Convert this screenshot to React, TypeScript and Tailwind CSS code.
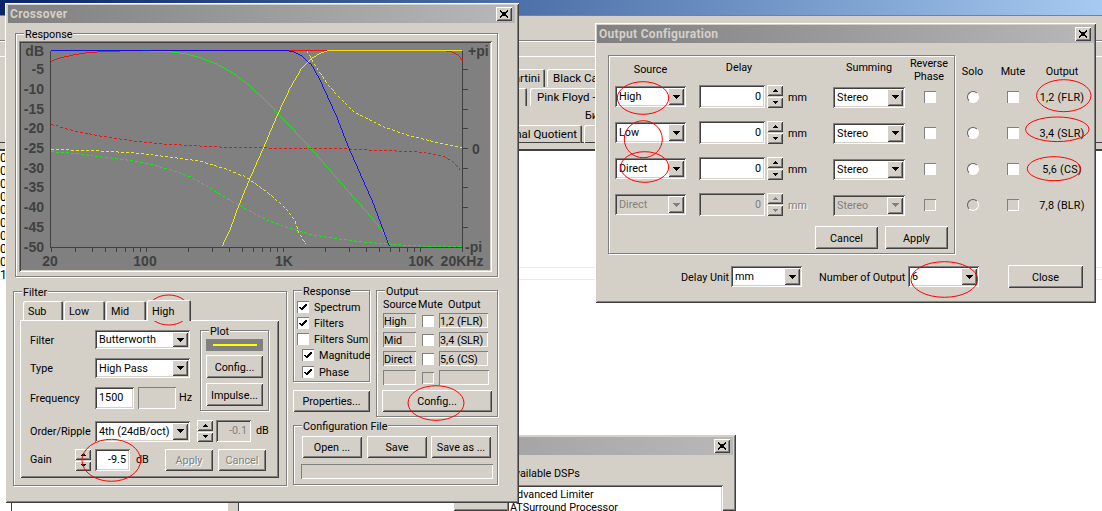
import React from "react";

const SUNKEN = "shadow-[inset_1px_1px_0_#808080,inset_-1px_-1px_0_#fff,inset_2px_2px_0_#404040,inset_-2px_-2px_0_#d4d0c8]";
const RAISED = "shadow-[inset_1px_1px_0_#fff,inset_-1px_-1px_0_#404040,inset_2px_2px_0_#d4d0c8,inset_-2px_-2px_0_#808080]";
const THIN = "shadow-[inset_1px_1px_0_#808080,inset_-1px_-1px_0_#fff]";
const ETCH = "border border-[#808080] shadow-[inset_1px_1px_0_#fff,1px_1px_0_#fff]";
const DISABLED_TEXT = "text-[#808080] [text-shadow:1px_1px_0_#fff]";

function CloseBtn() {
  return (
    <div className={`w-[16px] h-[14px] bg-[#d4d0c8] flex items-center justify-center ${RAISED}`}>
      <svg width="10" height="8" viewBox="0 0 10 8">
        <path d="M1 0.5 L9 7.5 M9 0.5 L1 7.5" stroke="#000" strokeWidth="1.7" shapeRendering="crispEdges" />
      </svg>
    </div>
  );
}

function TitleBar({ title, cls }: { title: string; cls: string }) {
  return (
    <div className={`h-[18px] flex items-center justify-between pl-[2px] pr-[3px] shrink-0 bg-gradient-to-r from-[#808080] to-[#b8b8b8] ${cls}`}>
      <span className="font-bold text-[12px] text-[#d4d0c8] tracking-[0.3px]">{title}</span>
      <CloseBtn />
    </div>
  );
}

function Btn({ label, cls, disabled }: { label: string; cls: string; disabled?: boolean }) {
  return (
    <div className={`flex items-center justify-center pt-[2px] bg-[#d4d0c8] ${RAISED} ${disabled ? DISABLED_TEXT : ""} ${cls}`}>{label}</div>
  );
}

function Arrow({ up, color = "#000", w = 7 }: { up?: boolean; color?: string; w?: number }) {
  const h = Math.ceil(w / 2);
  return (
    <svg width={w} height={h} viewBox={`0 0 ${w} ${h}`} shapeRendering="crispEdges">
      <path d={up ? `M${w / 2} 0 L${w} ${h} L0 ${h} Z` : `M0 0 L${w} 0 L${w / 2} ${h} Z`} fill={color} />
    </svg>
  );
}

function Combo({ value, cls, disabled }: { value: string; cls: string; disabled?: boolean }) {
  return (
    <div className={`flex items-stretch p-[2px] ${SUNKEN} ${disabled ? "bg-[#d4d0c8]" : "bg-white"} ${cls}`}>
      <div className={`flex-1 pl-[2px] pt-[1px] flex items-center whitespace-nowrap overflow-hidden ${disabled ? "text-[#808080]" : ""}`}>{value}</div>
      <div className={`w-[16px] shrink-0 bg-[#d4d0c8] flex items-center justify-center ${RAISED}`}>
        <Arrow color={disabled ? "#808080" : "#000"} />
      </div>
    </div>
  );
}

function Edit({ value, cls, disabled }: { value?: string; cls: string; disabled?: boolean }) {
  return (
    <div className={`flex items-center px-[4px] whitespace-nowrap ${SUNKEN} ${disabled ? "bg-[#d4d0c8] text-[#808080]" : "bg-white"} ${cls}`}>{value}</div>
  );
}

function Spin({ cls, disabled }: { cls: string; disabled?: boolean }) {
  const c = disabled ? "#808080" : "#000";
  return (
    <div className={`flex flex-col gap-[1px] ${cls}`}>
      <div className={`flex-1 bg-[#d4d0c8] flex items-center justify-center ${RAISED}`}><Arrow up color={c} w={5} /></div>
      <div className={`flex-1 bg-[#d4d0c8] flex items-center justify-center ${RAISED}`}><Arrow color={c} w={5} /></div>
    </div>
  );
}

function Check({ checked, disabled, cls = "" }: { checked?: boolean; disabled?: boolean; cls?: string }) {
  return (
    <div className={`w-[12px] h-[12px] shrink-0 ${THIN} ${disabled ? "bg-[#d4d0c8]" : "bg-white"} flex items-center justify-center ${cls}`}>
      {checked && (
        <svg width="8" height="8" viewBox="0 0 8 8" shapeRendering="crispEdges">
          <path d="M0.5 4 L3 6.5 L7.5 1.2" fill="none" stroke="#000" strokeWidth="1.8" />
        </svg>
      )}
    </div>
  );
}

function Radio({ disabled }: { disabled?: boolean }) {
  return (
    <div className={`w-[12px] h-[12px] rounded-full border border-t-[#606060] border-l-[#606060] border-r-white border-b-white ${disabled ? "bg-[#d4d0c8]" : "bg-white"}`} />
  );
}

function Group({ label, cls, children }: { label?: string; cls: string; children: React.ReactNode }) {
  return (
    <div className={`relative ${ETCH} ${cls}`}>
      {label && <span className="absolute -top-[5px] left-[8px] bg-[#d4d0c8] px-[1px] leading-[12px] whitespace-nowrap">{label}</span>}
      {children}
    </div>
  );
}

function RO({ value, cls }: { value?: string; cls: string }) {
  return <div className={`flex items-center pl-[1px] pt-[2px] whitespace-nowrap ${THIN} ${cls}`}>{value}</div>;
}

const P = (pts: number[][]) => pts.map((p, i) => `${i ? "L" : "M"}${(p[0] / 3).toFixed(1)} ${(p[1] / 3).toFixed(1)}`).join(" ");

const curves: { c: string; d?: boolean; p: number[][] }[] = [
  { c: "#00ff00", d: true, p: [[152,455],[220,460],[300,470],[380,480],[450,492],[520,512],[570,530],[620,558],[680,595],[740,628],[800,660],[860,682],[930,703],[1000,715],[1080,725],[1170,733],[1260,738],[1387,739]] },
  { c: "#ffff00", d: true, p: [[152,448],[300,453],[420,460],[500,470],[600,483],[680,508],[740,533],[800,575],[850,618],[885,660],[895,695],[917,732]] },
  { c: "#ffff00", d: true, p: [[920,152],[945,195],[985,255],[1020,295],[1060,335],[1100,355],[1150,380],[1220,405],[1300,425],[1387,443]] },
  { c: "#ff0000", d: true, p: [[152,373],[220,392],[300,408],[400,423],[500,433],[700,443],[900,445],[1000,445],[1100,450],[1250,455],[1330,468],[1365,490],[1385,515]] },
  { c: "#ff0000", p: [[152,184],[180,174],[215,166],[260,158],[320,154],[400,152],[1330,152],[1355,155],[1375,165],[1387,182]] },
  { c: "#00ff00", p: [[425,152],[510,155],[560,162],[600,173],[650,192],[700,220],[750,258],[800,305],[850,358],[900,410],[950,465],[1000,522],[1050,580],[1100,635],[1145,690],[1170,733]] },
  { c: "#0000ff", p: [[152,152],[860,152],[880,155],[905,168],[935,195],[960,240],[985,295],[1010,350],[1045,440],[1080,520],[1120,610],[1150,690],[1168,738]] },
  { c: "#ffff00", p: [[667,738],[690,690],[715,620],[750,535],[790,445],[830,350],[870,265],[905,205],[935,175],[960,160],[985,152],[1387,152]] },
];

const yLabels: [string, number][] = [["dB",152],["-5",207],["-10",268],["-15",328],["-20",385],["-25",445],["-30",505],["-35",560],["-40",622],["-45",682],["-50",741]];
const freqTicks: number[] = [];
[10, 100, 1000, 10000].forEach((d) => { for (let i = 1; i < 10; i++) { const f = d * i; if (f >= 20 && f <= 20000) freqTicks.push(f); } });
const fx = (f: number) => Math.round(50.7 + 137 * Math.log10(f / 20)) + 0.5;

function Chart() {
  const txt = { fill: "#404040", fontFamily: "'Liberation Sans', Arial, sans-serif", fontSize: 14, fontWeight: 700 };
  return (
    <svg width="469" height="227" viewBox="21 43 469 227" className="block bg-[#808080]">
      <g stroke="#404040" strokeWidth="1" shapeRendering="crispEdges">
        <path d="M50.5 51 V247.5 H462.5 V51" fill="none" />
        {yLabels.slice(1, -1).map(([, y]) => <path key={y} d={`M462.5 ${Math.round(y / 3) + 0.5} h5`} />)}
        {freqTicks.map((f) => <path key={f} d={`M${fx(f)} 247.5 v4`} />)}
      </g>
      {curves.map((c, i) => (
        <path key={i} d={P(c.p)} fill="none" stroke={c.c} strokeWidth={0.85} strokeDasharray={c.d ? "3 2" : undefined} shapeRendering="crispEdges" />
      ))}
      {yLabels.map(([t, y]) => <text key={t} x="44" y={y / 3 + 5} textAnchor="end" {...txt}>{t}</text>)}
      <text x="468" y="56" {...txt}>+pi</text>
      <text x="472" y="153.5" {...txt}>0</text>
      <text x="465" y="252" {...txt}>-pi</text>
      <text x="50" y="266" textAnchor="middle" {...txt}>20</text>
      <text x="145" y="266" textAnchor="middle" {...txt}>100</text>
      <text x="284" y="266" textAnchor="middle" {...txt}>1K</text>
      <text x="421" y="266" textAnchor="middle" {...txt}>10K</text>
      <text x="462" y="266" textAnchor="middle" {...txt}>20KHz</text>
    </svg>
  );
}

function Tab({ label, cls }: { label: string; cls: string }) {
  return (
    <div className={`bg-[#d4d0c8] rounded-t-[2px] flex items-center shadow-[inset_1px_1px_0_#fff,inset_-1px_0_0_#404040,inset_-2px_0_0_#808080] pl-[5px] pt-[2px] ${cls}`}>{label}</div>
  );
}

function Crossover() {
  return (
    <div className={`absolute left-[5px] top-[3px] w-[514px] h-[500px] bg-[#d4d0c8] pl-[3px] pt-[2px] flex flex-col ${RAISED}`}>
      <TitleBar title="Crossover" cls="w-[507px]" />
      <Group label="Response" cls="ml-[7px] mt-[10px] w-[483px] h-[244px] pl-[3px] pt-[7px] shrink-0">
        <div className={`w-[473px] h-[231px] p-[2px] ${SUNKEN}`}>
          <Chart />
        </div>
      </Group>
      <div className="flex ml-[5px] mt-[13px] items-start">
        <Group label="Filter" cls="w-[274px] h-[195px] mt-[1px] pl-[6px] pt-[8px] shrink-0">
          <div className="flex items-end pl-[3px] h-[20px] relative z-10 gap-[1px]">
            <Tab label="Sub" cls="w-[40px] h-[19px]" />
            <Tab label="Low" cls="w-[41px] h-[19px]" />
            <Tab label="Mid" cls="w-[40px] h-[19px]" />
            <Tab label="High" cls="w-[44px] h-[21px] -mb-[1px]" />
          </div>
          <div className={`w-[259px] h-[158px] pl-[10px] pt-[10px] flex flex-col ${RAISED}`}>
            <div className="flex h-[81px] shrink-0">
              <div className="w-[170px] flex flex-col gap-[9px] shrink-0">
                <div className="flex items-center h-[19px]"><span className="w-[65px] pt-[2px]">Filter</span><Combo value="Butterworth" cls="w-[95px] h-[19px]" /></div>
                <div className="flex items-center h-[20px]"><span className="w-[65px] pt-[2px]">Type</span><Combo value="High Pass" cls="w-[95px] h-[20px]" /></div>
                <div className="flex items-center h-[22px]">
                  <span className="w-[65px] pt-[2px]">Frequency</span>
                  <Edit value="1500" cls="w-[39px] h-[22px]" />
                  <RO cls="w-[38px] h-[22px] ml-[4px]" />
                  <span className="ml-[3px]">Hz</span>
                </div>
              </div>
              <Group label="Plot" cls="w-[69px] h-[81px] px-[5px] pt-[8px] flex flex-col">
                <div className="h-[12px] shrink-0 bg-[#808080] pt-[5px] flex justify-center"><div className="w-[44px] h-[2px] bg-[#ffff00]" /></div>
                <Btn label="Config..." cls="h-[23px] mt-[4px]" />
                <Btn label="Impulse..." cls="h-[23px] mt-[5px]" />
              </Group>
            </div>
            <div className="flex items-center h-[22px] mt-[9px] shrink-0">
              <span className="w-[65px] whitespace-nowrap pt-[2px]">Order/Ripple</span>
              <Combo value="4th (24dB/oct)" cls="w-[95px] h-[21px]" />
              <Spin cls="w-[16px] h-[22px] ml-[7px]" />
              <Edit value="-0.1" disabled cls="w-[35px] h-[22px] ml-[3px] justify-end" />
              <span className="ml-[5px]">dB</span>
            </div>
            <div className="flex items-center h-[22px] mt-[7px] shrink-0">
              <span className="w-[45px]">Gain</span>
              <Spin cls="w-[16px] h-[22px]" />
              <Edit value="-9.5" cls="w-[35px] h-[22px] ml-[4px] justify-end" />
              <span className="ml-[6px] w-[29px]">dB</span>
              <Btn label="Apply" disabled cls="w-[48px] h-[22px]" />
              <Btn label="Cancel" disabled cls="w-[48px] h-[22px] ml-[5px]" />
            </div>
          </div>
        </Group>
        <div className="ml-[6px] w-[205px] shrink-0 flex flex-col">
          <div className="flex gap-[6px] h-[127px]">
            <div className="flex flex-col w-[77px]">
              <Group label="Response" cls="h-[92px] pl-[3px] pt-[10px] flex flex-col gap-[4px]">
                <div className="flex items-center h-[12px] gap-[5px]"><Check checked /><span className="pt-[2px]">Spectrum</span></div>
                <div className="flex items-center h-[12px] gap-[5px]"><Check checked /><span className="pt-[2px]">Filters</span></div>
                <div className="flex items-center h-[12px] gap-[5px] whitespace-nowrap"><Check /><span className="pt-[2px]">Filters Sum</span></div>
                <div className="flex items-center h-[12px] gap-[5px] pl-[5px]"><Check checked /><span className="pt-[2px]">Magnitude</span></div>
                <div className="flex items-center h-[12px] gap-[5px] pl-[5px] mt-[1px]"><Check checked /><span className="pt-[2px]">Phase</span></div>
              </Group>
              <Btn label="Properties..." cls="h-[22px] mt-[8px]" />
            </div>
            <Group label="Output" cls="w-[122px] h-[127px] pl-[6px] flex flex-col">
              <div className="flex h-[15px] mt-[6px] whitespace-nowrap leading-[15px]">
                <span className="w-[35px]">Source</span>
                <span className="w-[30px]">Mute</span>
                <span>Output</span>
              </div>
              <div className="grid grid-cols-[39px_17px_50px] gap-y-[4px] mt-[1px] items-center">
                <RO value="High" cls="w-[33px] h-[15px]" />
                <Check />
                <RO value="1,2 (FLR)" cls="w-[49px] h-[15px]" />
                <RO value="Mid" cls="w-[33px] h-[15px]" />
                <Check />
                <RO value="3,4 (SLR)" cls="w-[49px] h-[15px]" />
                <RO value="Direct" cls="w-[33px] h-[15px]" />
                <Check />
                <RO value="5,6 (CS)" cls="w-[49px] h-[15px]" />
                <RO cls="w-[33px] h-[15px]" />
                <Check disabled />
                <RO cls="w-[50px] h-[15px]" />
              </div>
              <Btn label="Config..." cls="w-[110px] h-[22px] mt-[5px] -ml-[1px]" />
            </Group>
          </div>
          <Group label="Configuration File" cls="h-[60px] mt-[8px] pl-[8px] pt-[10px] flex flex-col">
            <div className="flex h-[22px]">
              <Btn label="Open ..." cls="w-[60px]" />
              <Btn label="Save" cls="w-[60px] ml-[5px]" />
              <Btn label="Save as ..." cls="w-[60px] ml-[4px]" />
            </div>
            <div className={`w-[192px] h-[15px] mt-[6px] ${THIN} -ml-[1px]`} />
          </Group>
        </div>
      </div>
    </div>
  );
}

function OutRow({ source, dis }: { source: string; dis?: boolean }) {
  return (
    <div className="flex items-center h-[23px]">
      <Combo value={source} disabled={dis} cls="w-[71px] h-[21px]" />
      <Edit value="0" disabled={dis} cls="w-[66px] h-[23px] ml-[13px] justify-end" />
      <Spin disabled={dis} cls="w-[16px] h-[23px] ml-[2px]" />
      <span className={`ml-[5px] w-[45px] pt-[2px] ${dis ? "text-[#808080] [text-shadow:1px_1px_0_#fff]" : ""}`}>mm</span>
      <Combo value="Stereo" disabled={dis} cls="w-[72px] h-[21px] mt-[1px]" />
      <Check disabled={dis} cls="ml-[19px]" />
    </div>
  );
}

function OutputConfig() {
  const rows: [boolean, string][] = [[false, "1,2 (FLR)"], [false, "3,4 (SLR)"], [false, "5,6 (CS)"], [true, "7,8 (BLR)"]];
  return (
    <div className={`absolute left-[595px] top-[23px] w-[501px] h-[280px] bg-[#d4d0c8] pl-[2px] pt-[2px] flex flex-col ${RAISED}`}>
      <TitleBar title="Output Configuration" cls="w-[497px]" />
      <div className="flex mt-[12px] ml-[11px] shrink-0">
        <Group cls="w-[347px] h-[199px] pl-[6px] shrink-0">
          <div className="flex h-[29px] items-end text-center">
            <div className="w-[71px] pb-[8px]">Source</div>
            <div className="w-[80px] ml-[13px] pb-[10px]">Delay</div>
            <div className="w-[72px] ml-[54px] pb-[10px]">Summing</div>
            <div className="w-[50px] -ml-[1px] leading-[13px] pb-[2px]">Reverse<br />Phase</div>
          </div>
          <div className="flex flex-col gap-[13px]">
            <OutRow source="High" />
            <OutRow source="Low" />
            <OutRow source="Direct" />
            <OutRow source="Direct" dis />
          </div>
          <div className="flex mt-[10px] ml-[200px] gap-[7px]">
            <Btn label="Cancel" cls="w-[63px] h-[23px]" />
            <Btn label="Apply" cls="w-[63px] h-[23px]" />
          </div>
        </Group>
        <div className="grid grid-cols-[35px_46px_52px] auto-rows-[36px] grid-rows-[14px] pt-[10px] justify-items-center items-center">
          <span>Solo</span><span>Mute</span><span className="whitespace-nowrap">Output</span>
          {rows.map(([d, t]) => (
            <React.Fragment key={t}>
              <Radio disabled={d} />
              <Check disabled={d} />
              <span className="whitespace-nowrap pt-[1px] tracking-[0.2px]">{t}</span>
            </React.Fragment>
          ))}
        </div>
      </div>
      <div className="flex items-center mt-[11px] ml-[84px] h-[23px] shrink-0">
        <span className="w-[50px] whitespace-nowrap pt-[2px]">Delay Unit</span>
        <Combo value="mm" cls="w-[71px] h-[21px]" />
        <span className="w-[89px] ml-[17px] whitespace-nowrap pt-[2px]">Number of Output</span>
        <Combo value="6" cls="w-[71px] h-[21px]" />
        <Btn label="Close" cls="w-[75px] h-[23px] ml-[29px]" />
      </div>
    </div>
  );
}

function DspWindow() {
  return (
    <div className={`absolute left-[453px] top-[434px] w-[283px] h-[77px] overflow-hidden bg-[#d4d0c8] p-[3px] flex flex-col ${RAISED}`}>
      <TitleBar title="" cls="w-[277px] from-[#a0a0a0]" />
      <div className="pl-[52px] mt-[12px] whitespace-nowrap leading-[13px] shrink-0">Available DSPs</div>
      <div className={`ml-[51px] w-[216px] h-[60px] mt-[5px] bg-white pl-[3px] pt-[3px] leading-[13px] whitespace-nowrap shrink-0 ${SUNKEN}`}>
        <div>Advanced Limiter</div>
        <div>ATSurround Processor</div>
      </div>
    </div>
  );
}

function BgTab({ label, cls }: { label: string; cls: string }) {
  return (
    <div className={`h-[18px] flex items-center whitespace-nowrap overflow-hidden pl-[6px] rounded-t-[2px] text-[11.5px] shadow-[inset_1px_1px_0_#fff,inset_-1px_0_0_#404040,inset_-2px_0_0_#808080] ${cls}`}>{label}</div>
  );
}

function Background() {
  return (
    <div className="absolute inset-0 flex flex-col">
      <div className="h-[15px] shrink-0 bg-gradient-to-r from-[#0a246a] to-[#a6caf0]" />
      <div className="h-[134px] shrink-0 bg-[#d4d0c8] border-t border-[#808080] flex flex-col">
        <div className="h-[25px] shrink-0 border-b border-[#808080]" />
        <div className="h-[16px] shrink-0 border-t border-white border-b" />
        <div className="h-[12px] shrink-0" />
        <div className="flex pl-[480px]">
          <BgTab label="Martini" cls="w-[65px] justify-end pr-[5px]" />
          <BgTab label="Black Cat" cls="w-[80px] ml-[2px]" />
        </div>
        <div className="flex pl-[480px] mt-[1px]">
          <BgTab label="Floyd" cls="w-[47px]" />
          <BgTab label="Pink Floyd -" cls="w-[80px] ml-[3px] pl-[7px]" />
        </div>
        <div className="h-[19px] pl-[585px] flex items-center">Би</div>
        <div className="flex pl-[440px] h-[18px] border-b border-[#404040] items-start">
          <BgTab label="Emotional Quotient" cls="w-[142px] justify-end pr-[5px]" />
          <BgTab label="" cls="w-[20px] ml-[2px]" />
        </div>
      </div>
      <div className="h-[2px] shrink-0 bg-[#404040]" />
      <div className="flex-1 bg-white flex flex-col">
        <div className="text-[12px] leading-[13px] h-[140px] pt-[1px] w-[5px] overflow-hidden">
          {["0","0","0","0","0","0","0","0","0","1"].map((d, i) => <div key={i}>{d}</div>)}
        </div>
        <div className="h-px bg-[#efecdf] mt-[-24px]" />
        <div className="h-px bg-[#efecdf] mt-[11px]" />
        <div className="flex-1" />
        <div className="h-[8px] flex shrink-0">
          <div className="ml-[11px] w-[217px] border-l border-[#404040] bg-white" />
          <div className="w-[10px] bg-[#d4d0c8]" />
          <div className="w-px bg-[#404040]" />
        </div>
      </div>
    </div>
  );
}

function Marks() {
  const e: [number, number, number, number][] = [
    [168.7, 310, 20.7, 15], [111.3, 460.3, 29.3, 21], [436, 403, 28, 17.3],
    [643, 98, 25.7, 16.3], [643.3, 139.2, 19, 18.5], [644.7, 167, 24, 15.3],
    [1063.8, 95.7, 27.2, 16], [1057.3, 129.3, 31.7, 12.3], [1054, 168.7, 26.7, 12], [944.3, 279.5, 33.3, 17.8],
  ];
  return (
    <svg width="1102" height="511" className="absolute inset-0 pointer-events-none">
      {e.map(([cx, cy, rx, ry]) => <ellipse key={cx} cx={cx} cy={cy} rx={rx} ry={ry} fill="none" stroke="#ff0000" strokeWidth="1" />)}
    </svg>
  );
}

export default function App() {
  return (
    <div className="relative w-[1102px] h-[511px] overflow-hidden bg-white text-black text-[10.8px] leading-[14px] font-['Roboto','Liberation_Sans',sans-serif]">
      <Background />
      <DspWindow />
      <Crossover />
      <OutputConfig />
      <Marks />
    </div>
  );
}
